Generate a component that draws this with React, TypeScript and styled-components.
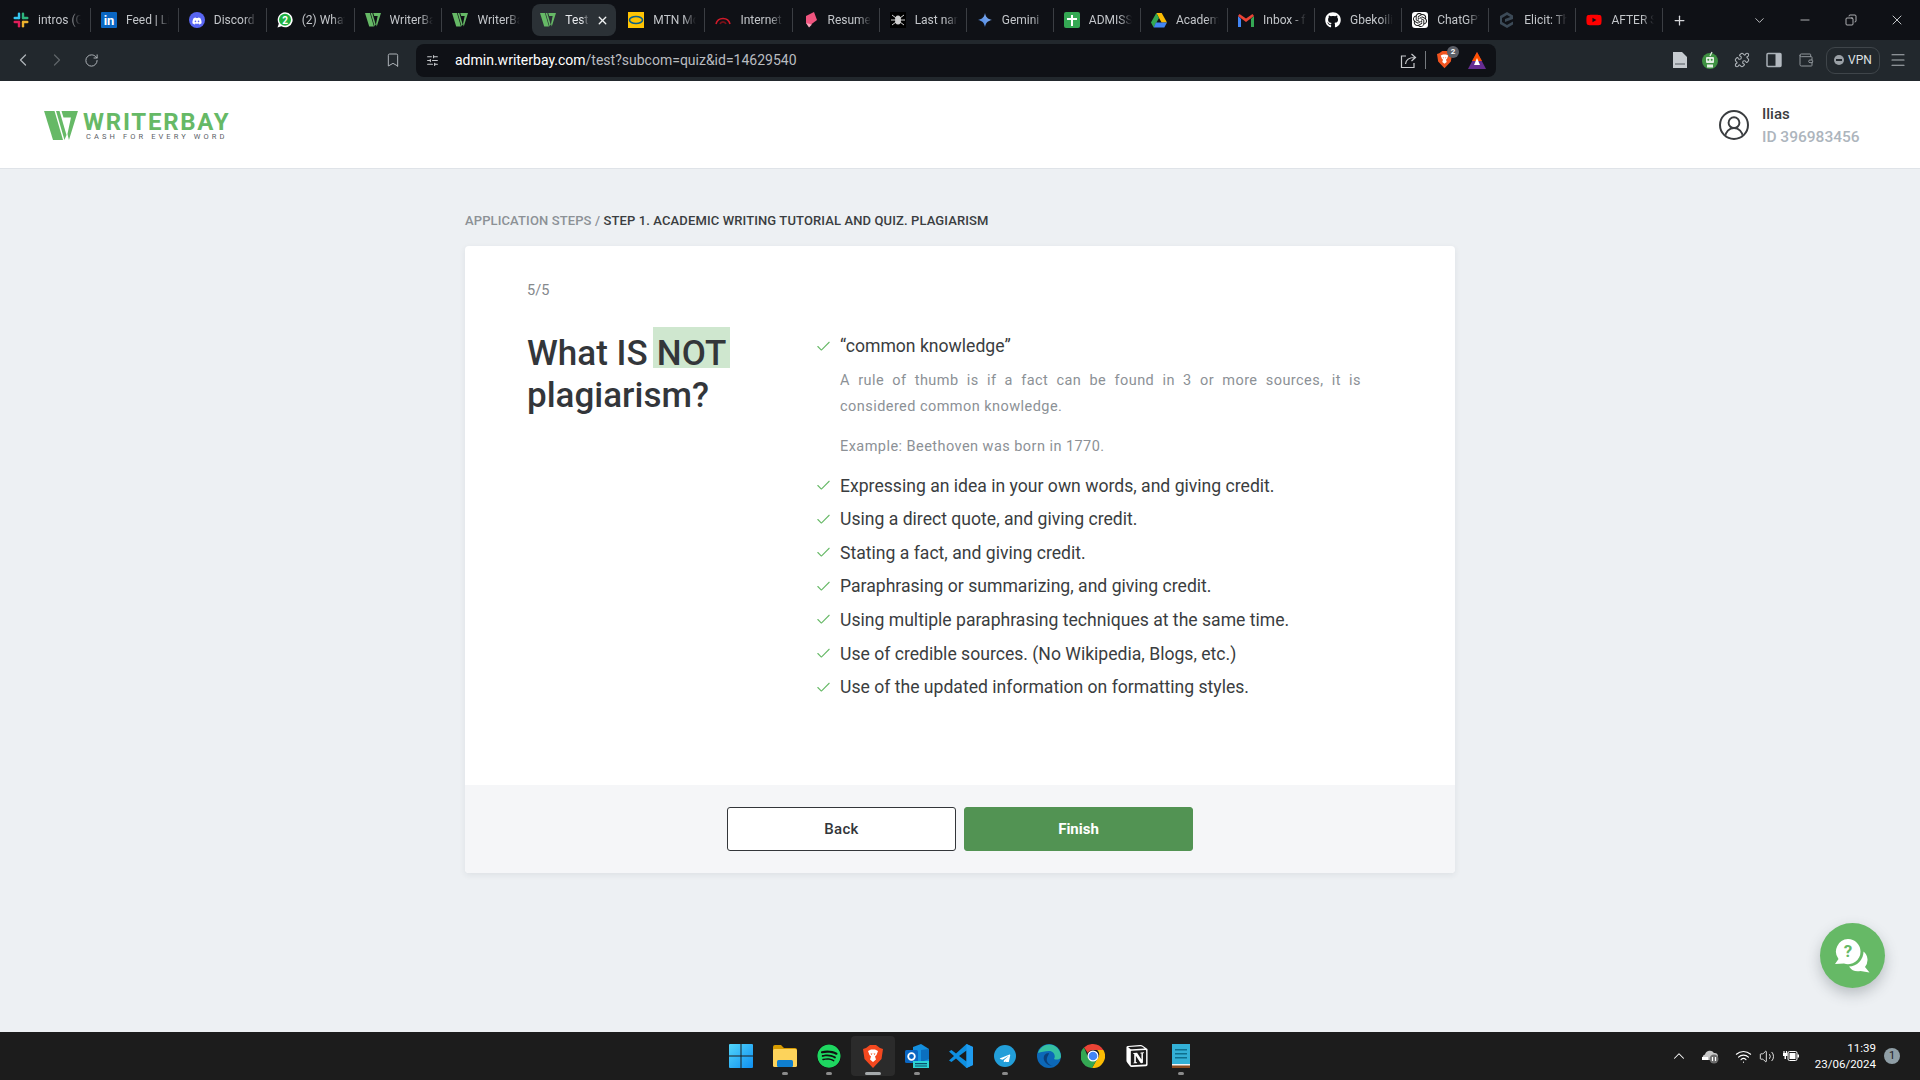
import React from 'react'
import styled, { createGlobalStyle } from 'styled-components'
import { Check, ChevronDown, ChevronLeft, ChevronRight, ChevronUp, Copy, Menu, Minus, Plus, RotateCw, Bookmark, SlidersHorizontal, X, Puzzle, Wallet, Wifi, Volume2, UserRound } from 'lucide-react'
import { FaDiscord, FaGithub, FaTelegramPlane, FaYoutube, FaSpotify } from 'react-icons/fa'
import { SiNotion, SiOpenai } from 'react-icons/si'

const GlobalStyle = createGlobalStyle`
  html, body { margin: 0; padding: 0; }
  body { background: #edf0f3; font-family: Roboto, "Liberation Sans", sans-serif; }
  * { box-sizing: border-box; }
`

const Screen = styled.div`
  position: relative;
  width: 1920px;
  height: 1080px;
  display: flex;
  flex-direction: column;
  overflow: hidden;
`

/* browser chrome */
const TabStrip = styled.div`
  height: 40px;
  flex: none;
  display: flex;
  align-items: center;
  padding-left: 3px;
  background: #0f1116;
`

const Tab = styled.div<{ $active?: boolean; $noSep?: boolean; $after?: boolean }>`
  width: ${({ $active, $after }) => ($active ? '84px' : $after ? '87.1px' : '87.9px')};
  height: ${({ $active }) => ($active ? '32px' : '24px')};
  margin: ${({ $active }) => ($active ? '0 2px' : '0')};
  padding-left: ${({ $active }) => ($active ? '8px' : '10px')};
  display: flex;
  align-items: center;
  gap: 9px;
  flex: none;
  color: ${({ $active }) => ($active ? '#e8eaed' : '#c3c6ca')};
  background: ${({ $active }) => ($active ? '#2b3136' : 'transparent')};
  border-radius: ${({ $active }) => ($active ? '8px' : '0')};
  border-right: 1px solid ${({ $noSep, $active }) => ($noSep || $active ? 'transparent' : '#3b3e43')};
  font-size: 12px;
`

const TabIcon = styled.span`
  width: 16px;
  height: 16px;
  flex: none;
  display: flex;
  align-items: center;
  justify-content: center;
`

const TabTitle = styled.span<{ $short?: boolean }>`
  width: ${({ $short }) => ($short ? '24px' : '43px')};
  overflow: hidden;
  white-space: nowrap;
  -webkit-mask-image: linear-gradient(90deg, #000 70%, transparent);
  mask-image: linear-gradient(90deg, #000 70%, transparent);
`

const TabClose = styled.span`
  margin-left: -2px;
  display: flex;
  color: #f1f3f4;
`

const NewTab = styled.span`
  margin-left: 2px;
  width: 28px;
  display: flex;
  justify-content: center;
  color: #d5d7da;
`

const WindowControls = styled.div`
  margin-left: auto;
  display: flex;
  align-items: center;
  color: #e0e2e4;
`

const WindowButton = styled.span<{ $width: number }>`
  width: ${({ $width }) => $width}px;
  display: flex;
  justify-content: center;
`

const Toolbar = styled.div`
  height: 41px;
  flex: none;
  display: flex;
  align-items: center;
  padding: 0 12px 1px;
  background: #22282d;
  color: #aeb3b8;
`

const NavGroup = styled.div`
  display: flex;
  align-items: center;
  width: 404px;
`

const NavButton = styled.span<{ $dim?: boolean; $gap?: number }>`
  width: 34px;
  margin-left: ${({ $gap }) => $gap ?? 0}px;
  display: flex;
  justify-content: center;
  color: ${({ $dim }) => ($dim ? '#5f6468' : '#aeb3b8')};
`

const AddressBar = styled.div`
  width: 1080px;
  height: 33px;
  flex: none;
  display: flex;
  align-items: center;
  padding: 0 10px;
  border-radius: 8px;
  background: #0f1116;
`

const Url = styled.span`
  margin-left: 16px;
  font-size: 14px;
  color: #b9bcc0;
  flex: 1;
`

const UrlHost = styled.span`
  color: #fff;
`

const AddressDivider = styled.span`
  width: 1px;
  height: 18px;
  margin: 0 11px 0 8px;
  background: #75797e;
`

const BadgeWrap = styled.span`
  position: relative;
  display: flex;
  margin-right: 16px;
`

const CountBadge = styled.span`
  position: absolute;
  top: -5px;
  right: -7px;
  width: 12px;
  height: 12px;
  border-radius: 50%;
  background: #5d6068;
  color: #fff;
  font-size: 8px;
  font-weight: 700;
  text-align: center;
  line-height: 12px;
`

const ExtensionGroup = styled.div`
  flex: 1;
  display: flex;
  align-items: center;
  justify-content: flex-end;
  gap: 12px;
`

const ExtensionButton = styled.span<{ $nudge?: number }>`
  width: 20px;
  margin-left: ${({ $nudge }) => $nudge ?? 0}px;
  display: flex;
  justify-content: center;
  color: #aeb3b8;
`

const VpnPill = styled.span`
  width: 54px;
  height: 27px;
  margin: 0 -4px 0 -2px;
  display: flex;
  align-items: center;
  justify-content: center;
  gap: 4px;
  border: 1px solid #3f454a;
  border-radius: 9px;
  font-size: 12px;
  color: #dfe1e3;
`

const VpnDot = styled.span`
  width: 10px;
  height: 10px;
  display: flex;
  align-items: center;
  justify-content: center;
  border-radius: 50%;
  background: #9aa0a6;

  &::after {
    content: '';
    width: 6px;
    height: 1.5px;
    background: #22282d;
  }
`

/* site header */
const SiteHeader = styled.header`
  height: 88px;
  flex: none;
  display: flex;
  align-items: center;
  justify-content: space-between;
  padding: 0 50px 0 44px;
  background: #fff;
  border-bottom: 1px solid #dfe3e8;
`

const Logo = styled.div`
  display: flex;
  align-items: center;
  gap: 5px;
  margin-top: 2px;
`

const LogoText = styled.div`
  display: flex;
  flex-direction: column;
`

const LogoName = styled.span`
  font-size: 24px;
  line-height: 22px;
  font-weight: 700;
  letter-spacing: 1.75px;
  color: #66b966;
`

const LogoTagline = styled.span`
  font-size: 7.5px;
  line-height: 8px;
  letter-spacing: 3.1px;
  color: #5b6066;
  padding-left: 3px;
`

const UserBox = styled.div`
  display: flex;
  align-items: center;
  gap: 13px;
  width: 151px;
`

const UserInfo = styled.div`
  display: flex;
  flex-direction: column;
  gap: 3px;
  padding-top: 1px;
`

const UserName = styled.span`
  font-size: 15px;
  line-height: 20px;
  font-weight: 500;
  color: #3a3d40;
`

const UserId = styled.span`
  font-size: 15.5px;
  line-height: 20px;
  font-weight: 500;
  color: #adb5bd;
`

const UserAvatar = styled.span`
  width: 30px;
  height: 30px;
  display: flex;
  align-items: center;
  justify-content: center;
  border: 2px solid #3a3d40;
  border-radius: 50%;
  overflow: hidden;
  color: #3a3d40;
`

/* quiz */
const Main = styled.main`
  flex: 1;
  width: 990px;
  margin: 0 auto;
  padding-top: 45px;
`

const Breadcrumb = styled.div`
  height: 14px;
  line-height: 14px;
  margin-bottom: 18px;
  font-size: 13px;
  font-weight: 500;
  letter-spacing: 0.12px;
  text-transform: uppercase;
  color: #3a3d40;
`

const BreadcrumbRoot = styled.span`
  color: #8c9196;
`

const Card = styled.section`
  border-radius: 4px;
  overflow: hidden;
  background: #fff;
  box-shadow: 0 2px 6px rgba(40, 50, 60, 0.08);
`

const CardBody = styled.div`
  height: 539px;
  padding: 36px 94px 0 62px;
`

const Progress = styled.div`
  font-size: 14.5px;
  line-height: 18px;
  color: #85898d;
  margin-bottom: 18px;
`

const QuizGrid = styled.div`
  display: grid;
  grid-template-columns: 288px 1fr;
`

const Question = styled.h1`
  margin: 15px 0 0;
  font-size: 35px;
  line-height: 42px;
  font-weight: 500;
  color: #33363a;
`

const Highlight = styled.span`
  margin-left: -3.5px;
  padding: 6px 4px 0;
  background: linear-gradient(#cfe7cf, #cfe7cf) no-repeat 0 0 / 100% 41px;
`

const AnswerList = styled.ul`
  margin: 0;
  padding: 15px 0 0;
  list-style: none;
`

const AnswerRow = styled.li`
  display: flex;
  align-items: flex-start;
  gap: 8px;
  min-height: 33.6px;
  font-size: 17.6px;
  line-height: 26px;
  color: #3a3d40;
`

const AnswerCheck = styled.span`
  width: 17px;
  height: 26px;
  flex: none;
  display: flex;
  align-items: center;
  color: #66b966;
`

const AnswerDetail = styled.p<{ $justify?: boolean }>`
  margin: 0 0 14px;
  font-size: 14.5px;
  line-height: 26px;
  color: #8c9196;
  letter-spacing: 0.45px;
  text-align: ${({ $justify }) => ($justify ? 'justify' : 'left')};
`

const DetailBlock = styled.div`
  padding: 1px 0 0 25px;
  margin-bottom: -1px;
`

const CardFooter = styled.div`
  height: 88px;
  display: flex;
  justify-content: center;
  align-items: center;
  gap: 8px;
  background: #f5f6f8;
`

const FooterButton = styled.button<{ $primary?: boolean }>`
  width: 229px;
  height: 44px;
  border-radius: 3px;
  border: 1px solid ${({ $primary }) => ($primary ? '#529353' : '#33363a')};
  background: ${({ $primary }) => ($primary ? '#529353' : '#fff')};
  color: ${({ $primary }) => ($primary ? '#fff' : '#33363a')};
  font-family: inherit;
  font-size: 15px;
  font-weight: ${({ $primary }) => ($primary ? 700 : 500)};
  letter-spacing: ${({ $primary }) => ($primary ? '0' : '0.3px')};
`

const HelpButton = styled.button`
  position: absolute;
  right: 35px;
  bottom: 92px;
  width: 65px;
  height: 65px;
  padding: 0;
  border: 0;
  border-radius: 50%;
  display: flex;
  align-items: center;
  justify-content: center;
  background: #66b966;
  box-shadow: 0 6px 14px rgba(50, 60, 70, 0.28);
`

/* windows taskbar */
const Taskbar = styled.footer`
  height: 48px;
  flex: none;
  display: grid;
  grid-template-columns: 1fr auto 1fr;
  align-items: center;
  background: #1c1c1c;
  color: #fff;
`

const TaskIcons = styled.div`
  grid-column: 2;
  display: flex;
  padding-left: 2px;
`

const TaskIcon = styled.span<{ $active?: boolean; $running?: boolean }>`
  position: relative;
  width: 44px;
  height: 40px;
  display: flex;
  align-items: center;
  justify-content: center;
  border-radius: 4px;
  background: ${({ $active }) => ($active ? '#2b2b2b' : 'transparent')};

  &::after {
    content: '';
    position: absolute;
    bottom: 1px;
    left: 50%;
    transform: translateX(-50%);
    display: ${({ $running, $active }) => ($running || $active ? 'block' : 'none')};
    width: ${({ $active }) => ($active ? '16px' : '6px')};
    height: 3px;
    border-radius: 2px;
    background: ${({ $active }) => ($active ? '#a5a9ab' : '#8b8b8b')};
  }
`

const Tray = styled.div`
  grid-column: 3;
  display: flex;
  align-items: center;
  justify-content: flex-end;
  padding-right: 20px;
`

const TrayIcon = styled.span<{ $width: number }>`
  width: ${({ $width }) => $width}px;
  display: flex;
  justify-content: center;
`

const Clock = styled.div`
  margin-left: 7px;
  width: 62px;
  text-align: right;
  font-size: 11.5px;
  line-height: 16px;
`

const NotifyBadge = styled.span`
  margin-left: 8px;
  width: 16px;
  height: 16px;
  border-radius: 50%;
  background: #8f9ea6;
  color: #1c1c1c;
  font-size: 11px;
  line-height: 16px;
  text-align: center;
`

const WMark = ({ size = 16 }: { size?: number }) => (
  <svg width={size} height={size * 0.85} viewBox="0 0 34 29" fill="#66b966">
    <polygon points="0,0 10.500,0 19,29 9,29" />
    <polygon points="12,0 15.500,0 22.500,24 20.500,29" />
    <polygon points="17.500,0 34,0 25,29 23.500,23 27,6.500 19.500,6.500" />
  </svg>
)

const SlackIcon = () => (
  <svg width="16" height="16" viewBox="0 0 16 16">
    <rect x="4.800" y="0.500" width="2.400" height="6.700" rx="1.200" fill="#36c5f0" />
    <rect x="0.500" y="4.800" width="6.700" height="2.400" rx="1.200" fill="#36c5f0" />
    <rect x="0.500" y="8.800" width="6.700" height="2.400" rx="1.200" fill="#e01e5a" />
    <rect x="4.800" y="8.800" width="2.400" height="6.700" rx="1.200" fill="#e01e5a" />
    <rect x="8.800" y="0.500" width="2.400" height="6.700" rx="1.200" fill="#2eb67d" />
    <rect x="8.800" y="4.800" width="6.700" height="2.400" rx="1.200" fill="#2eb67d" />
    <rect x="8.800" y="8.800" width="6.700" height="2.400" rx="1.200" fill="#ecb22e" />
    <rect x="8.800" y="8.800" width="2.400" height="6.700" rx="1.200" fill="#ecb22e" />
  </svg>
)

const LinkedinIcon = () => (
  <svg width="16" height="16" viewBox="0 0 16 16">
    <rect width="16" height="16" rx="1" fill="#0a66c2" />
    <text x="8" y="13" textAnchor="middle" fontSize="13" fontWeight="700" fontFamily="Roboto, sans-serif" fill="#fff">in</text>
  </svg>
)

const DiscordIcon = () => (
  <svg width="16" height="16" viewBox="0 0 16 16">
    <circle cx="8" cy="8" r="8" fill="#5865f2" />
    <foreignObject x="3" y="3" width="10" height="10">
      <FaDiscord size={10} color="#fff" />
    </foreignObject>
  </svg>
)

const WhatsappIcon = () => (
  <svg width="16" height="16" viewBox="0 0 16 16">
    <path d="M8 .3a7.500 7.500 0 1 1-3.600 14L.5 15.500l1.300-3.800A7.500 7.500 0 0 1 8 .3z" fill="#fff" />
    <circle cx="8" cy="7.800" r="6" fill="#1fb141" />
    <text x="8" y="11.500" textAnchor="middle" fontSize="10" fontWeight="700" fontFamily="Roboto, sans-serif" fill="#fff">2</text>
  </svg>
)

const MtnIcon = () => (
  <svg width="16" height="16" viewBox="0 0 16 16">
    <rect width="16" height="16" fill="#ffc403" />
    <ellipse cx="8" cy="8" rx="6.500" ry="3.500" fill="none" stroke="#0b5f8a" strokeWidth="1.600" />
  </svg>
)

const GaugeIcon = () => (
  <svg width="16" height="16" viewBox="0 0 16 16" fill="none" stroke="#d11a2a" strokeWidth="1.600">
    <path d="M1 12a7.200 7.200 0 0 1 14 0" />
    <path d="M5 12a3.200 3.200 0 0 1 6 0" stroke="#7a1018" />
  </svg>
)

const ResumeIcon = () => (
  <svg width="16" height="16" viewBox="0 0 16 16">
    <path d="M3 4l8-4 3 8-8 6-3-3z" fill="#f0557f" />
    <path d="M3 11l3 4.500 3-3z" fill="#f8a7bd" />
  </svg>
)

const SpiderIcon = () => (
  <svg width="16" height="16" viewBox="0 0 16 16">
    <rect width="16" height="16" fill="#000" />
    <ellipse cx="8" cy="8" rx="3" ry="4.500" fill="#cfcfcf" />
    <path d="M2 3l4 3M14 3l-4 3M1 8h4M15 8h-4M2 13l4-3M14 13l-4-3" stroke="#cfcfcf" strokeWidth="1" />
  </svg>
)

const GeminiIcon = () => (
  <svg width="16" height="16" viewBox="0 0 16 16">
    <defs>
      <linearGradient id="gem" x1="0" y1="1" x2="1" y2="0">
        <stop offset="0" stopColor="#3f7ee0" />
        <stop offset="1" stopColor="#8fb6f5" />
      </linearGradient>
    </defs>
    <path d="M8 1c.6 3.800 2.600 6.200 7 7-4.400.8-6.400 3.200-7 7-.6-3.800-2.600-6.200-7-7 4.400-.8 6.400-3.200 7-7z" fill="url(#gem)" />
  </svg>
)

const SheetIcon = () => (
  <svg width="16" height="16" viewBox="0 0 16 16">
    <rect width="16" height="16" rx="2" fill="#34a853" />
    <path d="M7 3h2v3h4v2H9v6H7V8H3V6h4z" fill="#fff" />
  </svg>
)

const DriveIcon = () => (
  <svg width="16" height="15" viewBox="0 0 16 15">
    <path d="M5.300 0h5.400l5.300 9.500h-5.400z" fill="#fbbc04" />
    <path d="M5.300 0L0 9.500 2.700 14.500 8 5z" fill="#34a853" />
    <path d="M5 9.500h11l-2.700 5H2.700z" fill="#4285f4" />
  </svg>
)

const GmailIcon = () => (
  <svg width="16" height="13" viewBox="0 0 16 13">
    <path d="M0 2v11h3V5z" fill="#4285f4" />
    <path d="M16 2v11h-3V5z" fill="#34a853" />
    <path d="M0 2l8 6 8-6-1.500-2L8 4.500 1.500 0z" fill="#ea4335" />
  </svg>
)

const ElicitIcon = () => (
  <svg width="16" height="16" viewBox="0 0 16 16" fill="#3c4a57">
    <path d="M8 0l6 3.500v3L8 3 3 6v4l5 3 6-3.500v3L8 16l-7-4V4z" />
    <path d="M6 7l8-3v3l-8 3z" />
  </svg>
)

const ShareIcon = () => (
  <svg width="17" height="17" viewBox="0 0 17 17" fill="none" stroke="#c8cacd" strokeWidth="1.200">
    <path d="M6 4H1.500v11.500h12.500V11" />
    <path d="M5.500 12c.5-4 3-6.500 9-6.500M11.500 2l4 3.500-4 3.500" />
  </svg>
)

const BraveIcon = ({ size = 18, big }: { size?: number; big?: boolean }) => (
  <svg width={size} height={size * 1.15} viewBox="0 0 20 23">
    <path d="M3 3l4-3h6l4 3 3 1-1.500 10L10 23 1.500 14 0 4z" fill={big ? '#f4481f' : '#f1541f'} />
    <path d="M5 6l3-1.500h4L15 6l-1.500 4-1.500 1.500 1 3L10 17l-3-2.500 1-3L6.500 10z" fill="#fff" />
    <path d="M7.500 8.500h2l-1 1.500zM10.500 8.500h2l-1 1.500z" fill="#f1541f" />
  </svg>
)

const RewardsIcon = () => (
  <svg width="18" height="17" viewBox="0 0 18 17">
    <polygon points="9,0 18,17 0,17" fill="#662d91" />
    <polygon points="9,0 14,9 4,9" fill="#ff5000" />
    <polygon points="9,6 12,13 6,13" fill="#fff" />
  </svg>
)

const PageIcon = () => (
  <svg width="14" height="16" viewBox="0 0 14 16">
    <path d="M0 0h9l5 5v11H0z" fill="#c6cbd0" />
    <rect x="2" y="11" width="10" height="2" fill="#8b9197" />
  </svg>
)

const RobotIcon = () => (
  <svg width="16" height="18" viewBox="0 0 16 18">
    <circle cx="8" cy="10" r="8" fill="#3f9142" />
    <path d="M8 5l2-4" stroke="#e4efe4" strokeWidth="1.200" />
    <rect x="4" y="6" width="8" height="6" rx="1" fill="#e4efe4" />
    <circle cx="6.300" cy="8.800" r="1" fill="#3f9142" />
    <circle cx="9.700" cy="8.800" r="1" fill="#3f9142" />
    <rect x="5" y="13.500" width="6" height="3" fill="#e4efe4" />
  </svg>
)

const SidebarIcon = () => (
  <svg width="16" height="16" viewBox="0 0 16 16">
    <rect x="1" y="1.500" width="14" height="13" rx="1" fill="none" stroke="#a9b0b6" strokeWidth="1.500" />
    <rect x="9.500" y="1.500" width="5.500" height="13" fill="#b4bac0" />
  </svg>
)

const WindowsIcon = () => (
  <svg width="24" height="24" viewBox="0 0 24 24">
    <defs>
      <linearGradient id="win" x1="0" y1="0" x2="1" y2="1">
        <stop offset="0" stopColor="#52d6fb" />
        <stop offset="1" stopColor="#0f8ff0" />
      </linearGradient>
    </defs>
    <path d="M0 1a1 1 0 0 1 1-1h10.500v11.500H0zM12.500 0H23a1 1 0 0 1 1 1v10.500H12.500zM0 12.500h11.500V24H1a1 1 0 0 1-1-1zM12.500 12.500H24V23a1 1 0 0 1-1 1H12.500z" fill="url(#win)" />
  </svg>
)

const FolderIcon = () => (
  <svg width="24" height="22" viewBox="0 0 24 22">
    <path d="M0 2a2 2 0 0 1 2-2h6l3 3h11a2 2 0 0 1 2 2v3H0z" fill="#d79b00" />
    <rect y="4" width="24" height="18" rx="1.500" fill="#fdd35b" />
    <rect x="4" y="15" width="16" height="7" rx="1.500" fill="#0f7fcf" />
  </svg>
)

const OutlookIcon = () => (
  <svg width="24" height="24" viewBox="0 0 24 24">
    <path d="M8 3l8-3 8 5v15H8z" fill="#1490df" />
    <path d="M16 6l8-1v10l-8 3z" fill="#0b6fbf" />
    <rect y="6" width="13" height="13" rx="1.500" fill="#0a66c2" />
    <circle cx="6.500" cy="12.500" r="3.300" fill="none" stroke="#fff" strokeWidth="1.800" />
    <rect x="8" y="17" width="16" height="7" fill="#2dd4d4" />
    <path d="M10 19h12v1.200H10zM10 21.500h12v1H10z" fill="#0a4f6b" />
  </svg>
)

const VsCodeIcon = () => (
  <svg width="24" height="24" viewBox="0 0 24 24">
    <path d="M17.500 0L24 3v18l-6.500 3L7 14.500 2.500 18 0 16.500 5 12 0 7.500 2.500 6 7 9.500z" fill="#0e8fe0" />
    <path d="M17.500 6.500L10 12l7.500 5.500z" fill="#1c1c1c" />
    <path d="M17.500 0L24 3v18l-6.500 3z" fill="#1f9cf0" />
  </svg>
)

const TelegramIcon = () => (
  <svg width="24" height="24" viewBox="0 0 24 24">
    <circle cx="12" cy="12" r="11" fill="#229ed9" />
    <foreignObject x="6" y="6" width="12" height="12">
      <FaTelegramPlane size={12} color="#fff" />
    </foreignObject>
  </svg>
)

const EdgeIcon = () => (
  <svg width="24" height="24" viewBox="0 0 24 24">
    <circle cx="12" cy="12" r="12" fill="#0c68b8" />
    <path d="M1 9C3 2 10-1 16 1c5 2 8 7 8 12-1 3-5 3-7 2 2-3 0-8-5-8-4 0-8 1-11 2z" fill="#35c0a2" />
    <path d="M12 9c-4 0-6 3-5 7 1 3 5 6 9 6-5-1-7-5-6-8 .5-2 2-4 2-5z" fill="#0a3f7a" />
  </svg>
)

const ChromeIcon = () => (
  <svg width="24" height="24" viewBox="0 0 24 24">
    <path d="M12 0a12 12 0 0 1 10.400 6H12a6 6 0 0 0-5.200 3L3 3.500A12 12 0 0 1 12 0z" fill="#ea4335" />
    <path d="M22.400 6A12 12 0 0 1 11 24l5.200-9a6 6 0 0 0 0-9z" fill="#fbbc04" />
    <path d="M3 3.500L7.800 15a6 6 0 0 0 8.400 0L11 24A12 12 0 0 1 3 3.500z" fill="#34a853" />
    <circle cx="12" cy="12" r="5.500" fill="#fff" />
    <circle cx="12" cy="12" r="4.300" fill="#4285f4" />
  </svg>
)

const NotepadIcon = () => (
  <svg width="18" height="24" viewBox="0 0 18 24">
    <rect width="18" height="22" fill="#33b0d6" />
    <rect y="21" width="18" height="3" fill="#8a4b1f" />
    <rect y="20" width="18" height="1.500" fill="#f2f2f2" />
    <path d="M3 5h12v1.500H3zM3 9h12v1.500H3zM3 13h12v1.500H3z" fill="#0e6f8d" />
  </svg>
)

const CloudPauseIcon = () => (
  <svg width="18" height="16" viewBox="0 0 18 16">
    <path d="M2 12a3 3 0 0 1 1-5.500A5 5 0 0 1 12 5a3 3 0 0 1 1 7z" fill="#c8c8c8" />
    <rect x="0" y="9" width="6" height="3" fill="#fff" />
    <circle cx="12" cy="11" r="4.500" fill="#6d6d6d" />
    <path d="M10.500 9v4M13.500 9v4" stroke="#fff" strokeWidth="1.200" />
  </svg>
)

const BatteryIcon = () => (
  <svg width="16" height="12" viewBox="0 0 16 12" fill="#fff">
    <path d="M1 1v2.500M3.500 1v2.500" stroke="#fff" strokeWidth="1.200" />
    <rect x="0" y="3" width="4.500" height="3" />
    <rect x="1.500" y="6" width="1.500" height="3" />
    <rect x="5" y="1.500" width="9" height="9" rx="1.500" fill="none" stroke="#fff" />
    <rect x="6.500" y="3" width="6" height="6" />
    <rect x="14.500" y="4.500" width="1.500" height="3" />
  </svg>
)

const HelpGlyph = () => (
  <svg width="35" height="34" viewBox="0 0 35 34">
    <path d="M13 0a12.500 12.500 0 0 1 12.500 12.500A12.500 12.500 0 0 1 9 24.500L0 25l3.500-5A12.500 12.500 0 0 1 13 0z" fill="#fff" />
    <path d="M28.500 12.500A11 11 0 0 1 30 28l4.500 5.500-9-1.500A11 11 0 0 1 14 27.500a15 15 0 0 0 14.500-15z" fill="#fff" />
    <text x="13" y="18" textAnchor="middle" fontSize="17" fontWeight="700" fontFamily="Roboto, sans-serif" fill="#66b966">?</text>
  </svg>
)

const tabs = [
  { title: 'intros (Gbekoil)', icon: <SlackIcon /> },
  { title: 'Feed | LinkedIn', icon: <LinkedinIcon /> },
  { title: 'Discord', icon: <DiscordIcon /> },
  { title: '(2) WhatsApp', icon: <WhatsappIcon /> },
  { title: 'WriterBay', icon: <WMark />, noSep: false },
  { title: 'WriterBay', icon: <WMark />, noSep: true },
  { title: 'Test', icon: <WMark />, active: true },
  { title: 'MTN Mobile', icon: <MtnIcon /> },
  { title: 'Internet', icon: <GaugeIcon /> },
  { title: 'Resume', icon: <ResumeIcon /> },
  { title: 'Last name', icon: <SpiderIcon /> },
  { title: 'Gemini', icon: <GeminiIcon /> },
  { title: 'ADMISSIONS', icon: <SheetIcon /> },
  { title: 'Academic', icon: <DriveIcon /> },
  { title: 'Inbox - fi', icon: <GmailIcon /> },
  { title: 'Gbekoilias', icon: <FaGithub size={16} color="#fff" /> },
  { title: 'ChatGPT', icon: <SiOpenai size={16} color="#111" style={{ background: '#fff', borderRadius: 3, padding: 1 }} /> },
  { title: 'Elicit: The', icon: <ElicitIcon /> },
  { title: 'AFTER SCHOOL', icon: <FaYoutube size={16} color="#f00" /> },
]

const activeTab = tabs.findIndex((t) => t.active)

const answers = [
  'Expressing an idea in your own words, and giving credit.',
  'Using a direct quote, and giving credit.',
  'Stating a fact, and giving credit.',
  'Paraphrasing or summarizing, and giving credit.',
  'Using multiple paraphrasing techniques at the same time.',
  'Use of credible sources. (No Wikipedia, Blogs, etc.)',
  'Use of the updated information on formatting styles.',
]

const taskIcons = [
  { key: 'windows', icon: <WindowsIcon /> },
  { key: 'files', icon: <FolderIcon />, running: true },
  { key: 'spotify', icon: <FaSpotify size={24} color="#1ed760" style={{ background: '#111', borderRadius: '50%' }} />, running: true },
  { key: 'brave', icon: <BraveIcon size={20} big />, active: true },
  { key: 'outlook', icon: <OutlookIcon />, running: true },
  { key: 'vscode', icon: <VsCodeIcon /> },
  { key: 'telegram', icon: <TelegramIcon />, running: true },
  { key: 'edge', icon: <EdgeIcon /> },
  { key: 'chrome', icon: <ChromeIcon /> },
  { key: 'notion', icon: <SiNotion size={22} color="#fff" /> },
  { key: 'notepad', icon: <NotepadIcon />, running: true },
]

const AnswerItem = ({ children }: { children: React.ReactNode }) => (
  <AnswerRow>
    <AnswerCheck>
      <Check size={17} strokeWidth={1.5} />
    </AnswerCheck>
    <span>{children}</span>
  </AnswerRow>
)

const App = () => (
  <Screen>
    <GlobalStyle />
    <TabStrip>
      {tabs.map((t, i) => (
        <Tab key={i} $active={t.active} $noSep={t.noSep} $after={i > activeTab}>
          <TabIcon>{t.icon}</TabIcon>
          <TabTitle $short={t.active}>{t.title}</TabTitle>
          {t.active && (
            <TabClose>
              <X size={13} strokeWidth={2.5} />
            </TabClose>
          )}
        </Tab>
      ))}
      <NewTab>
        <Plus size={15} strokeWidth={2} />
      </NewTab>
      <WindowControls>
        <WindowButton $width={46}>
          <ChevronDown size={15} strokeWidth={1.3} />
        </WindowButton>
        <WindowButton $width={46}>
          <Minus size={14} strokeWidth={1.3} />
        </WindowButton>
        <WindowButton $width={46}>
          <Copy size={12} strokeWidth={1.5} style={{ transform: 'scaleX(-1)' }} />
        </WindowButton>
        <WindowButton $width={46}>
          <X size={16} strokeWidth={1.3} />
        </WindowButton>
      </WindowControls>
    </TabStrip>

    <Toolbar>
      <NavGroup>
        <NavButton style={{ marginLeft: -6 }}>
          <ChevronLeft size={20} strokeWidth={1.5} />
        </NavButton>
        <NavButton $dim>
          <ChevronRight size={20} strokeWidth={1.5} />
        </NavButton>
        <NavButton>
          <RotateCw size={15} strokeWidth={1.6} />
        </NavButton>
        <NavButton $gap={268}>
          <Bookmark size={16} strokeWidth={1.5} />
        </NavButton>
      </NavGroup>
      <AddressBar>
        <SlidersHorizontal size={13} color="#c8cacd" />
        <Url>
          <UrlHost>admin.writerbay.com</UrlHost>/test?subcom=quiz&amp;id=14629540
        </Url>
        <ShareIcon />
        <AddressDivider />
        <BadgeWrap>
          <BraveIcon size={15} />
          <CountBadge>2</CountBadge>
        </BadgeWrap>
        <RewardsIcon />
      </AddressBar>
      <ExtensionGroup>
        <ExtensionButton>
          <PageIcon />
        </ExtensionButton>
        <ExtensionButton $nudge={-2}>
          <RobotIcon />
        </ExtensionButton>
        <ExtensionButton>
          <Puzzle size={16} strokeWidth={1.6} />
        </ExtensionButton>
        <ExtensionButton>
          <SidebarIcon />
        </ExtensionButton>
        <ExtensionButton>
          <Wallet size={16} strokeWidth={1.5} color="#8f959a" />
        </ExtensionButton>
        <VpnPill>
          <VpnDot />
          VPN
        </VpnPill>
        <ExtensionButton>
          <Menu size={18} strokeWidth={1.5} />
        </ExtensionButton>
      </ExtensionGroup>
    </Toolbar>

    <SiteHeader>
      <Logo>
        <WMark size={34} />
        <LogoText>
          <LogoName>WRITERBAY</LogoName>
          <LogoTagline>CASH FOR EVERY WORD</LogoTagline>
        </LogoText>
      </Logo>
      <UserBox>
        <UserAvatar>
          <UserRound size={26} strokeWidth={1.8} style={{ marginBottom: -5 }} />
        </UserAvatar>
        <UserInfo>
          <UserName>Ilias</UserName>
          <UserId>ID 396983456</UserId>
        </UserInfo>
      </UserBox>
    </SiteHeader>

    <Main>
      <Breadcrumb>
        <BreadcrumbRoot>Application steps / </BreadcrumbRoot>
        Step 1. Academic writing tutorial and quiz. Plagiarism
      </Breadcrumb>
      <Card>
        <CardBody>
          <Progress>5/5</Progress>
          <QuizGrid>
            <Question>
              What IS <Highlight>NOT</Highlight>
              <br />
              plagiarism?
            </Question>
            <AnswerList>
              <AnswerItem>“common knowledge”</AnswerItem>
              <DetailBlock>
                <AnswerDetail $justify>
                  A rule of thumb is if a fact can be found in 3 or more sources, it is considered common knowledge.
                </AnswerDetail>
                <AnswerDetail>Example: Beethoven was born in 1770.</AnswerDetail>
              </DetailBlock>
              {answers.map((a) => (
                <AnswerItem key={a}>{a}</AnswerItem>
              ))}
            </AnswerList>
          </QuizGrid>
        </CardBody>
        <CardFooter>
          <FooterButton>Back</FooterButton>
          <FooterButton $primary>Finish</FooterButton>
        </CardFooter>
      </Card>
    </Main>

    <HelpButton aria-label="Help">
      <HelpGlyph />
    </HelpButton>

    <Taskbar>
      <TaskIcons>
        {taskIcons.map((t) => (
          <TaskIcon key={t.key} $active={t.active} $running={t.running}>
            {t.icon}
          </TaskIcon>
        ))}
      </TaskIcons>
      <Tray>
        <TrayIcon $width={32}>
          <ChevronUp size={18} strokeWidth={1.4} />
        </TrayIcon>
        <TrayIcon $width={32}>
          <CloudPauseIcon />
        </TrayIcon>
        <TrayIcon $width={32}>
          <Wifi size={17} strokeWidth={1.6} />
        </TrayIcon>
        <TrayIcon $width={16}>
          <Volume2 size={17} strokeWidth={1.3} />
        </TrayIcon>
        <TrayIcon $width={32}>
          <BatteryIcon />
        </TrayIcon>
        <Clock>
          11:39
          <br />
          23/06/2024
        </Clock>
        <NotifyBadge>1</NotifyBadge>
      </Tray>
    </Taskbar>
  </Screen>
)

export default App
